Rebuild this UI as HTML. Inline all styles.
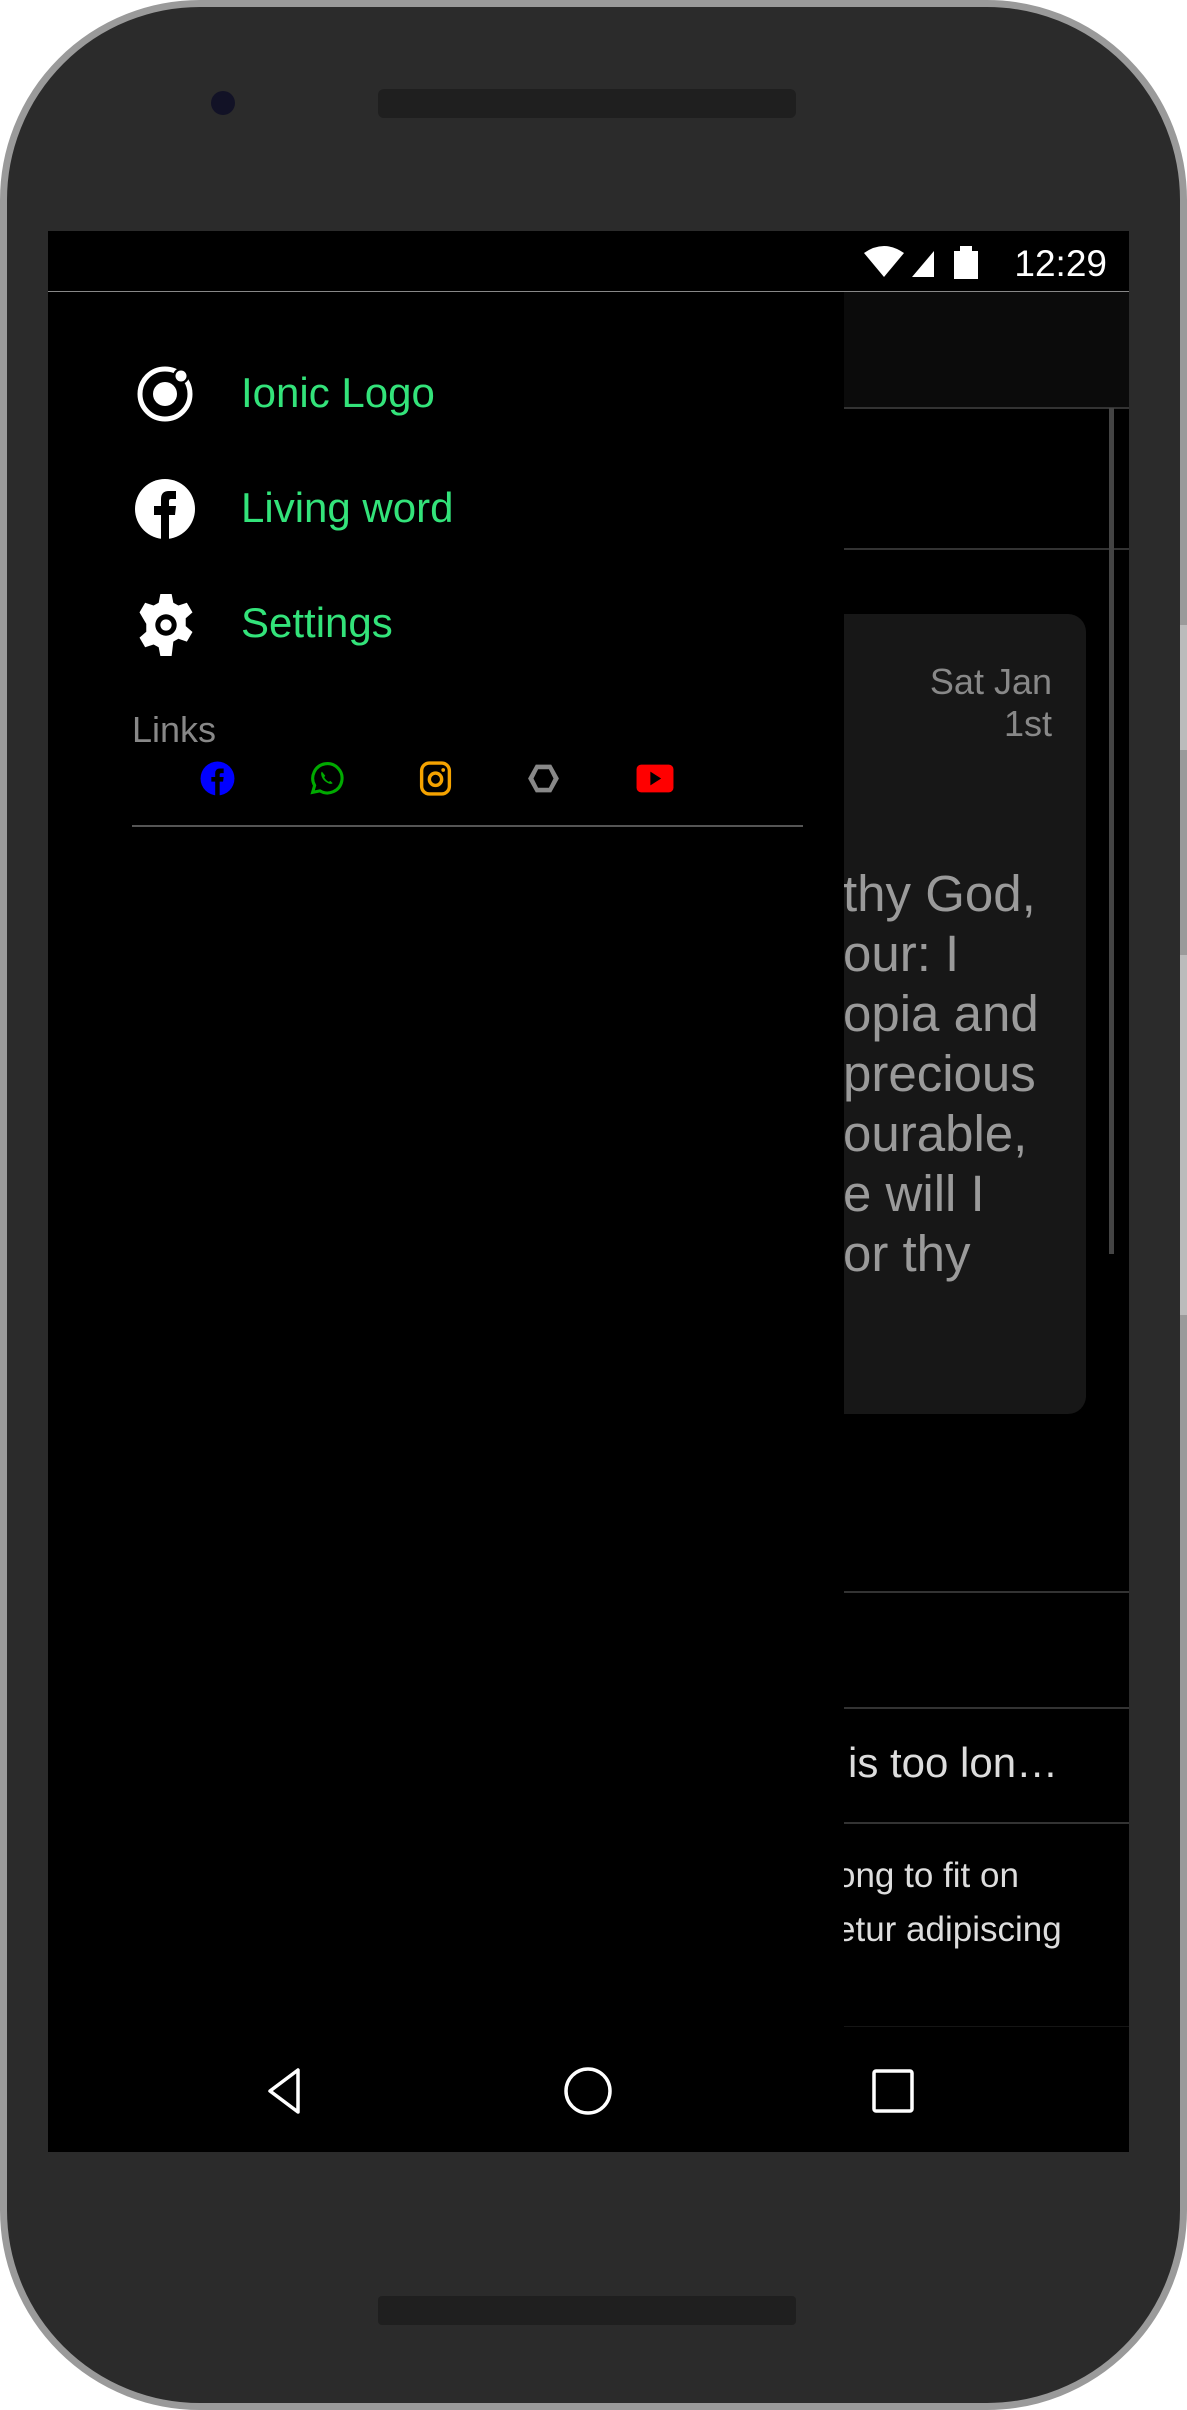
<!DOCTYPE html>
<html><head><meta charset="utf-8"><style>
*{margin:0;padding:0;box-sizing:border-box}
body{width:1187px;height:2410px;background:#fff;position:relative;overflow:hidden;font-family:"Liberation Sans",Arial,sans-serif}
.abs{position:absolute}
.phone{left:0;top:0;width:1187px;height:2410px;border-radius:200px;background:#2b2b2b;border:7px solid #9a9a9a}
.screen{left:48px;top:231px;width:1081px;height:1921px;background:#000;overflow:hidden}
.t{position:absolute;white-space:nowrap}
</style></head><body>
<div class="abs phone"></div>
<div class="abs" style="left:1180px;top:625px;width:7px;height:125px;background:#bbb"></div>
<div class="abs" style="left:1180px;top:955px;width:7px;height:360px;background:#bbb"></div>
<div class="abs" style="left:211px;top:91px;width:24px;height:24px;border-radius:50%;background:#121226"></div>
<div class="abs" style="left:378px;top:89px;width:418px;height:29px;border-radius:6px;background:#1f1f1f"></div>
<div class="abs" style="left:378px;top:2296px;width:418px;height:29px;border-radius:4px;background:#1f1f1f"></div>

<div class="abs screen">
  <div class="abs" style="left:0;top:60px;width:1081px;height:1px;background:#888"></div>
  <svg class="abs" style="left:814px;top:10px" width="140" height="44" viewBox="0 0 140 44">
    <path d="M2 12 Q22 -2 42 12 L22 36 Z" fill="#fff"/>
    <path d="M50 36 L72 10 L72 36 Z" fill="#fff"/>
    <rect x="92" y="10" width="24" height="28" fill="#fff"/><rect x="98" y="5" width="12" height="6" fill="#fff"/>
  </svg>
  <div class="t" style="right:22px;top:12px;font-size:37px;color:#fff">12:29</div>

  <div class="abs" style="left:796px;top:61px;width:285px;height:115px;background:#0b0b0b"></div>
  <div class="abs" style="left:796px;top:176px;width:285px;height:2px;background:#333"></div>
  <div class="abs" style="left:796px;top:317px;width:285px;height:2px;background:#333"></div>
  <div class="abs" style="left:1061px;top:177px;width:5px;height:846px;background:#444"></div>
  <div class="abs" style="left:700px;top:383px;width:338px;height:800px;border-radius:18px;background:#171717"></div>
  <div class="t" style="right:77px;top:430px;font-size:36px;color:#888;text-align:right;line-height:42px">Sat Jan<br>1st</div>
  <div class="t" style="left:795px;top:633px;font-size:51px;line-height:60px;color:#9a9a9a">thy God,<br>our: I<br>opia and<br>precious<br>ourable,<br>e will I<br>or thy</div>
  <div class="abs" style="left:796px;top:1360px;width:285px;height:2px;background:#333"></div>
  <div class="abs" style="left:796px;top:1476px;width:285px;height:2px;background:#333"></div>
  <div class="abs" style="left:796px;top:1591px;width:285px;height:2px;background:#333"></div>
  <div class="abs" style="left:796px;top:1795px;width:285px;height:1px;background:#151515"></div>
  <div class="t" style="left:800px;top:1508px;font-size:42px;color:#ddd">is too lon…</div>
  <div class="t" style="left:788px;top:1618px;font-size:35px;line-height:54px;color:#ddd">ong to fit on<br>etur adipiscing</div>

  <div class="abs" style="left:0;top:61px;width:796px;height:1860px;background:#000"></div>
  <svg class="abs" style="left:87px;top:133px" width="60" height="60" viewBox="0 0 60 60">
    <circle cx="30" cy="30" r="25" fill="none" stroke="#fff" stroke-width="5"/>
    <circle cx="30" cy="30" r="12" fill="#fff"/>
    <circle cx="46" cy="12" r="8" fill="#000"/><circle cx="46" cy="12" r="5.5" fill="#fff"/>
  </svg>
  <div class="t" style="left:193px;top:138px;font-size:42px;color:#33e37a">Ionic Logo</div>
  <svg class="abs" style="left:87px;top:248px" width="60" height="60" viewBox="0 0 60 60">
    <circle cx="30" cy="30" r="30" fill="#fff"/>
    <path d="M26 60 V36 H19 V27 H26 V20 Q26 12 34 12 H41 V20 H36 Q34 20 34 22 V27 H41 L40 36 H34 V60 Z" fill="#000"/>
  </svg>
  <div class="t" style="left:193px;top:253px;font-size:42px;color:#33e37a">Living word</div>
  <svg class="abs" style="left:87px;top:363px" width="62" height="62" viewBox="1.5 1 21 22">
    <path fill="#fff" fill-rule="evenodd" d="M10 1h4l.6 3.1 1.8 1 3-1 2 3.4-2.4 2.1v2.8l2.4 2.1-2 3.4-3-1-1.8 1L14 23h-4l-.6-3.1-1.8-1-3 1-2-3.4 2.4-2.1v-2.8L2.6 7.5l2-3.4 3 1 1.8-1zM12 8.2a3.8 3.8 0 1 0 0 7.6 3.8 3.8 0 1 0 0-7.6zM12 10a2 2 0 1 1 0 4 2 2 0 1 1 0-4z"/>
  </svg>
  <div class="t" style="left:193px;top:368px;font-size:42px;color:#33e37a">Settings</div>

  <div class="t" style="left:84px;top:478px;font-size:36px;color:#888">Links</div>
  <svg class="abs" style="left:151px;top:529px" width="37" height="37" viewBox="0 0 24 24"><circle cx="12" cy="12" r="11" fill="#00f"/><path d="M10.5 23V14H8v-3h2.5V8.7Q10.5 5.5 13.6 5.5H16v3h-1.6q-1 0-1 1V11H16l-.4 3h-2.2v9z" fill="#000"/></svg>
  <svg class="abs" style="left:260px;top:529px" width="37" height="37" viewBox="0 0 24 24"><path d="M3 21l1.3-4.5A9.5 9.5 0 1 1 7.7 20z" fill="none" stroke="#0a0" stroke-width="2"/><path d="M9 7.5q-1 1 0 3.5t4 4q2 1 3 0l-1.5-1.5-1 .7q-2-1-3-3l.7-1z" fill="#0a0"/></svg>
  <svg class="abs" style="left:369px;top:529px" width="37" height="37" viewBox="0 0 24 24"><rect x="3" y="2" width="18" height="20" rx="5" fill="none" stroke="#f5a300" stroke-width="2.2"/><circle cx="12" cy="12.5" r="4" fill="none" stroke="#f5a300" stroke-width="2.2"/><circle cx="17" cy="6.5" r="1.2" fill="#f5a300"/></svg>
  <svg class="abs" style="left:477px;top:529px" width="37" height="37" viewBox="0 0 24 24"><path d="M7 3h10l5 9-5 9H7L2 12z M8.5 6L5.5 12l3 6h7l3-6-3-6z" fill="#888" fill-rule="evenodd"/></svg>
  <svg class="abs" style="left:587px;top:529px" width="40" height="37" viewBox="0 0 26 24"><rect x="1" y="3" width="24" height="18" rx="3" fill="#f00"/><path d="M10 7.5v9l7-4.5z" fill="#000"/></svg>
  <div class="abs" style="left:84px;top:594px;width:671px;height:2px;background:#555"></div>

  <svg class="abs" style="left:210px;top:1835px" width="60" height="50" viewBox="0 0 60 50"><path d="M40 4 L40 46 L12 25 Z" fill="none" stroke="#fff" stroke-width="3.5" stroke-linejoin="round"/></svg>
  <svg class="abs" style="left:514px;top:1834px" width="52" height="52" viewBox="0 0 52 52"><circle cx="26" cy="26" r="22" fill="none" stroke="#fff" stroke-width="3.5"/></svg>
  <svg class="abs" style="left:822px;top:1836px" width="46" height="48" viewBox="0 0 46 48"><rect x="4" y="4" width="38" height="40" rx="2" fill="none" stroke="#fff" stroke-width="3.5"/></svg>
</div>
</body></html>
